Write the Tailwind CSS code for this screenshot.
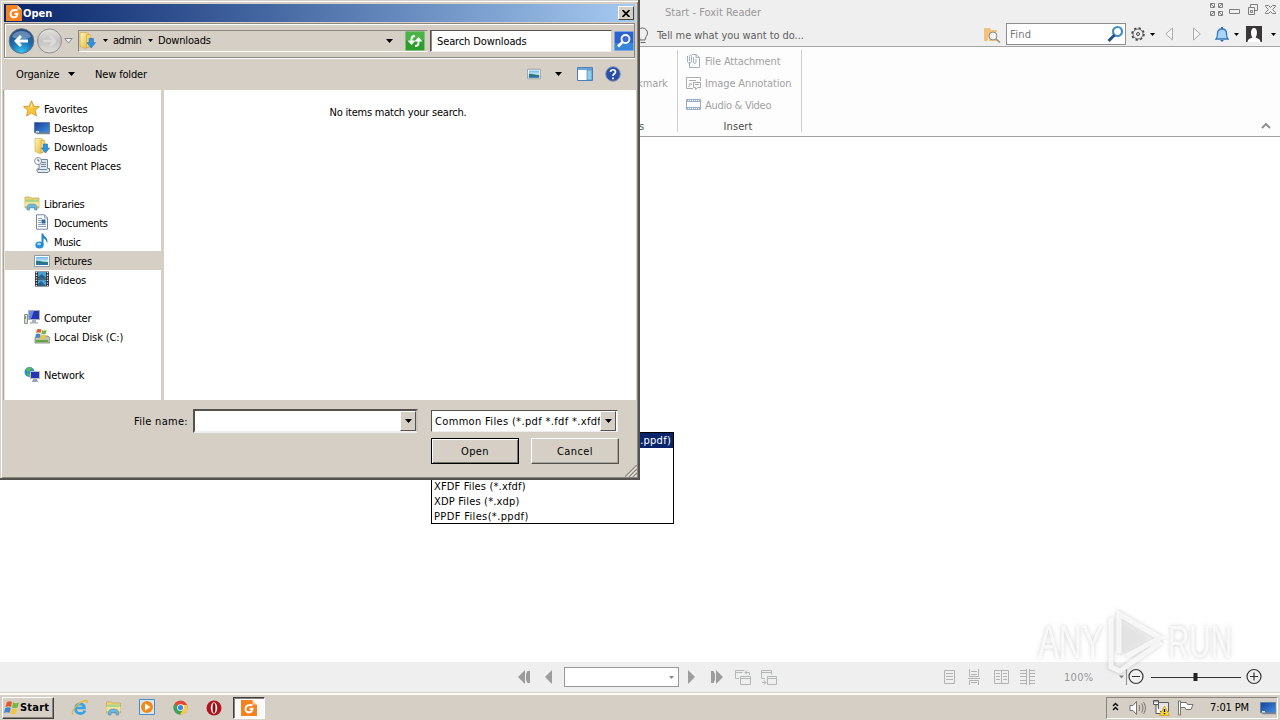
<!DOCTYPE html>
<html lang="en">
<head>
<meta charset="utf-8">
<title>Start - Foxit Reader</title>
<script src="https://cdn.jsdelivr.net/npm/@tailwindcss/browser@4"></script>
</head>
<body class="relative flex h-[720px] w-[1280px] flex-col overflow-hidden bg-white font-['DejaVu_Sans_Condensed','DejaVu_Sans',sans-serif] text-[11px] leading-[19px] text-black [font-stretch:condensed]">
<svg class="absolute h-0 w-0">
  <defs>
    <linearGradient id="gold" x1="0" y1="0" x2="1" y2="1"><stop offset="0" stop-color="#fff6b8"/><stop offset="1" stop-color="#e5b83f"/></linearGradient>
    <linearGradient id="screen" x1="0" y1="0" x2="1" y2="1"><stop offset="0" stop-color="#1a3c98"/><stop offset="1" stop-color="#3f93e4"/></linearGradient>
    <radialGradient id="orb" cx=".5" cy=".95" r=".95"><stop offset="0" stop-color="#35c4f4"/><stop offset=".5" stop-color="#1c6db0"/><stop offset="1" stop-color="#24477c"/></radialGradient>
    <linearGradient id="silver" x1="0" y1="0" x2="0" y2="1"><stop offset="0" stop-color="#e4e3e2"/><stop offset=".5" stop-color="#c4c2c0"/><stop offset="1" stop-color="#e2e0de"/></linearGradient>
    <linearGradient id="sky" x1="0" y1="0" x2="0" y2="1"><stop offset="0" stop-color="#6db7ea"/><stop offset=".6" stop-color="#d4eef5"/><stop offset="1" stop-color="#2b6d9a"/></linearGradient>
    <symbol id="foxit" viewBox="0 0 16 16"><path d="M0 0h11l5 5v11H0z" fill="#f58220"/><path d="M11.500 0v4.500H16z" fill="#ffd3a6"/><path d="M11.500 5.300C8 4.300 4.500 5.500 4.500 9c0 3 2.500 3.600 4.500 3.200 2-.5 2.300-1.700 2.500-3.400H8.500" fill="none" stroke="#fff" stroke-width="1.900"/></symbol>
    <symbol id="dl" viewBox="0 0 16 16"><path d="M1 .5h6l2 1v13l-3 1-5-2z" fill="url(#gold)" stroke="#d0a640" stroke-width=".6"/><path d="M7 2.500h4v11l-4 1z" fill="#f4d676" stroke="#c79f35" stroke-width=".5"/><path d="M9.500 6h4v4h2l-4 5-4-5h2z" fill="#2f93e0" stroke="#1c6cb4" stroke-width=".6"/></symbol>
    <symbol id="pic" viewBox="0 0 16 14"><path d="M.5 1.500h15v11H.5z" fill="#fff" stroke="#8a9aa6"/><path d="M2 3h12v8H2z" fill="url(#sky)"/><path d="M2 7c3-1 6 1 12 1v3H2z" fill="#2a7a7c"/><path d="M2 9.500h12V11H2z" fill="#2f6fa6"/></symbol>
    <symbol id="monitor" viewBox="0 0 16 14"><path d="M.5 1.500h15v10H.5z" fill="url(#screen)" stroke="#5f7fa8"/><path d="M1 12h15v1.300H3z" fill="#7d8894"/><path d="M2 10h3v1.500H2z" fill="#dbe7f3"/></symbol>
    <symbol id="down" viewBox="0 0 7 4"><path d="M0 0h7L3.500 4z" fill="currentColor"/></symbol>
    <symbol id="explorer" viewBox="0 0 16 16"><path d="M1 2h5l1 1h8v10H1z" fill="#eed175" stroke="#c4a44c" stroke-width=".7"/><path d="M2 4.500h12v3H2z" fill="#a9d68a"/><path d="M1 7h14v4H1z" fill="#f6e499"/><path d="M3 15v-3c0-4 10-4 10 0v3h-2.500v-2.500h-5V15z" fill="#69b8e6" stroke="#3f8abf" stroke-width=".6"/></symbol>
  </defs>
</svg>

<!-- Application title and quick access bar -->
<header class="flex h-[47px] shrink-0 flex-col border-b border-[#a3a3a3] bg-[#efefef] pl-[640px] text-[#5f5f5f]">
  <div class="flex h-[23px] items-center justify-between pr-[3px]">
    <span class="ml-[25px] pt-[2px] tracking-[0.02px] text-[#979797]">Start - Foxit Reader</span>
    <svg class="mb-[4px] h-[15px] w-[68px]" viewBox="0 0 68 15" fill="none" stroke="#7e7e7e"><path d="M1.500 1.500h4v4h-4zM9.500 1.500h4v4h-4zM1.500 9.500h4v4h-4zM9.500 9.500h4v4h-4zM2 2l3 3M13 2l-3 3M2 13l3-3M13 13l-3-3"/><path d="M20.500 7.500h10v4h-10z"/><path d="M41.500 5V2.500h7v6H46M39.500 5.500h6v7h-6zM41.500 8.500h2v2h-2z"/><path d="M56.500 3.500h3l2 2 2-2h3v1l-3 3 3 3v1h-3l-2-2-2 2h-3v-1l3-3-3-3z"/></svg>
  </div>
  <div class="flex h-[23px] items-center">
    <svg class="-ml-[4px] h-[18px] w-[14px]" viewBox="0 0 14 18" fill="none" stroke="#666"><path d="M4 14c0-3-2.500-4-2.500-7a5 5 0 0 1 10 0c0 3-2.500 4-2.500 7zM4.500 16.500h5"/></svg>
    <span class="ml-[7px] pt-px tracking-[-0.06px]">Tell me what you want to do...</span>
    <svg class="ml-auto h-[16px] w-[18px]" viewBox="0 0 18 16"><path d="M1 1h6l1 2h6v11H1z" fill="#f2c27c"/><path d="M14 6H8l-3 8" fill="none" stroke="#fff"/><circle cx="10" cy="9" r="4" fill="#f4f4f4" stroke="#8b8b8b"/><path d="m13 12 4 3.500" stroke="#8b8b8b" stroke-width="1.500"/></svg>
    <div class="mb-px ml-[5px] flex h-[22px] w-[120px] items-center justify-between border border-[#8e8e8e] bg-white pl-[3px]"><span class="tracking-[0.3px] text-[#777]">Find</span>
      <svg class="mr-[1px] h-[18px] w-[17px]" viewBox="0 0 17 18" fill="none"><circle cx="10.500" cy="6.500" r="4.500" stroke="#3f8fc4" stroke-width="2.200"/><path d="m7.500 10-6 6" stroke="#24517f" stroke-width="3"/></svg></div>
    <svg class="ml-[5px] h-[16px] w-[14px]" viewBox="0 0 14 16" fill="none" stroke="#444"><circle cx="7" cy="7" r="6" stroke-width="1.500" stroke-dasharray="2.300 2.400"/><circle cx="7" cy="7" r="5" stroke-width=".8"/><circle cx="7" cy="7" r="1.500"/></svg>
    <svg class="mb-px ml-[5px] h-[3px] w-[5px] text-black"><use href="#down"/></svg>
    <svg class="mb-[2px] ml-[10px] h-[14px] w-[8px]" viewBox="0 0 8 14" fill="#f4f4f4" stroke="#adadad"><path d="M7.500 1v12L.7 7z"/></svg>
    <svg class="mb-[2px] ml-[20px] h-[14px] w-[8px]" viewBox="0 0 8 14" fill="#f4f4f4" stroke="#adadad"><path d="M.5 1v12L7.300 7z"/></svg>
    <svg class="ml-[14px] h-[15px] w-[14px]" viewBox="0 0 14 15"><path d="M1 12c1.500-1.500 1.500-3 1.500-5.500C2.500 3.500 4 2 7 2s4.500 1.500 4.500 4.500C11.500 9 11.500 10.500 13 12z" fill="#a9d5fa" stroke="#3579bd" stroke-width="1.300"/><path d="M5 13h4l-2 2zM6 0h2v2H6z" fill="#2e6aa9"/></svg>
    <svg class="mb-px ml-[5px] h-[3px] w-[5px] text-black"><use href="#down"/></svg>
    <svg class="mb-px ml-[7px] h-[16px] w-[16px]" viewBox="0 0 16 16"><path d="M0 0h16v16H0z" fill="#3b3636"/><path d="M1.500 16c.5-3.500 3-3.500 5-4.500-2-2-2.300-9.500 1.500-9.500s3.500 7.500 1.500 9.500c2 1 4.500 1 5 4.500z" fill="#fff"/></svg>
    <svg class="mr-[4px] mb-px ml-[9px] h-[3px] w-[5px] text-black"><use href="#down"/></svg>
  </div>
</header>

<!-- Ribbon -->
<section class="flex h-[90px] shrink-0 border-b border-[#a3a3a3] bg-[#fdfdfd] pt-[3px] pb-[4px] pl-[640px] text-[#a2a2a2]">
  <div class="flex w-[38px] flex-col border-r border-[#cfcfcf] pt-[24px]"><span class="-ml-[3px] tracking-[-0.1px]">kmark</span><span class="mt-[24px] -ml-px text-[#555]">s</span></div>
  <div class="flex w-[124px] flex-col border-r border-[#cfcfcf] pl-[8px] *:shrink-0">
    <div class="flex h-[22px] items-center gap-[4px]"><svg class="h-[16px] w-[15px]" viewBox="0 0 15 16" fill="none" stroke="#a5b0bf"><path d="M6 1.500h4l3.500 3v10h-10V9"/><path d="M10 1.500v3h3.500M1.500 3v5c0 3 4 3 4 0V3.500c0-2-2-2-2 0V8M7.500 4v5c0 2 2.500 2 2.500 0V6"/></svg><span class="tracking-[-0.15px]">File Attachment</span></div>
    <div class="flex h-[22px] items-center gap-[4px]"><svg class="h-[16px] w-[15px]" viewBox="0 0 15 16" fill="none" stroke="#ababab"><path d="M7 13.500H.5v-11h14V6M3 5.500h7M2.500 12l2-4 1.500 2"/><path d="M7.500 7.500h7v5h-3l-2 2v-2h-2zM9 9.500h4"/></svg><span class="tracking-[-0.13px]">Image Annotation</span></div>
    <div class="flex h-[22px] items-center gap-[4px]"><svg class="h-[14px] w-[15px]" viewBox="0 0 15 14" fill="none" stroke="#9eafca"><path d="M.5 1.500h14v10H.5zM.5 3.500h14M.5 9.500h14"/><path d="M1 2.500h14M1 10.500h14" stroke-dasharray="1 1"/></svg><span class="tracking-[-0.28px]">Audio &amp; Video</span></div>
    <span class="mt-px w-[104px] text-center tracking-[0.1px] text-[#4a4a4a]">Insert</span>
  </div>
  <svg class="mt-auto mr-[9px] mb-[3px] ml-auto h-[6px] w-[10px]" viewBox="0 0 10 6" fill="none" stroke="#8c8c8c" stroke-width="1.800"><path d="m1 5 4-4 4 4"/></svg>
</section>

<main class="min-h-0 flex-1 bg-white"></main>

<!-- Page navigation and zoom -->
<footer class="flex h-[30px] shrink-0 items-center bg-[#efefef] pl-[518px] text-[#999]">
  <svg class="h-[14px] w-[12px]" viewBox="0 0 12 14" fill="#9c9c9c"><path d="M7 0v14L0 7zM9.500 1H12v12H9.500L8 10V4z"/></svg>
  <svg class="ml-[15px] h-[14px] w-[7px]" viewBox="0 0 7 14" fill="#9c9c9c"><path d="M7 0v14L0 7z"/></svg>
  <div class="ml-[12px] flex h-[20px] w-[115px] items-center justify-end border border-[#999] bg-white pr-[4px]"><svg class="h-[3px] w-[5px] text-[#888]"><use href="#down"/></svg></div>
  <svg class="ml-[9px] h-[14px] w-[7px]" viewBox="0 0 7 14" fill="#9c9c9c"><path d="M0 0v14l7-7z"/></svg>
  <svg class="ml-[16px] h-[14px] w-[12px]" viewBox="0 0 12 14" fill="#9c9c9c"><path d="M5 0v14l7-7zM0 1h2.500L4 4v6l-1.500 3H0z"/></svg>
  <svg class="ml-[12px] h-[17px] w-[17px]" viewBox="0 0 17 17" fill="none" stroke="#b2b8b5"><path d="M4 9.500H.5v-8h9M.5 3.500h7M5.500 7.500h10v8h-10zM5.500 9.500h10M14.500 6V3.500H10M12 1.500l-2 2 2 2"/></svg>
  <svg class="ml-[9px] h-[17px] w-[17px]" viewBox="0 0 17 17" fill="none" stroke="#b2b8b5"><path d="M4 9.500H.5v-8h10v4M.5 3.500h10M6.500 7.500h9v8h-9zM6.500 9.500h9M1 13.500h4M3 11.500l2 2-2 2"/></svg>
  <svg class="ml-[166px] h-[16px] w-[92px]" viewBox="0 0 92 16" fill="none" stroke="#b3b3b3"><path d="M.5 1.500h10v13H.5zM2 4.500h7M2 7.500h7M2 10.500h7"/><path d="M25.500 0v7.500h9V0M27 2.500h6M27 5.500h6M24 9.500h12M25.500 16v-4.500h9V16M27 13.500h6"/><path d="M50.500 1.500h14v13h-14zM57.500 1v14M52 4.500h4M52 7.500h4M52 10.500h4M59 4.500h4M59 7.500h4M59 10.500h4"/><path d="M82.500 0v16M85.500 0v16M76 1.500h6M76 4.500h6M76 7.500h6M76 11.500h6M76 14.500h6M86 1.500h5M86 4.500h5M86 7.500h5M86 11.500h5M86 14.500h5"/></svg>
  <span class="ml-[28px] w-[42px] shrink-0 tracking-[0.3px]">100%</span>
  <svg class="ml-[13px] h-[18px] w-[148px]" viewBox="0 0 148 18" fill="none" stroke="#333" stroke-width="1.200"><path d="M0 7.500h5l-2.500 3z" fill="#888" stroke="none"/><path d="M7.500 1v16" stroke="#999"/><circle cx="17" cy="8.500" r="7"/><path d="M13 8.500h8M32 9.500h90"/><path d="M74.500 5h4v8h-4z" fill="#222" stroke="none"/><circle cx="135" cy="8.500" r="7"/><path d="M131 8.500h8M135 4.500v8"/></svg>
</footer>

<!-- Taskbar -->
<nav class="flex h-[28px] shrink-0 items-center border-t border-[#d8d4cc] bg-[#d6cfc6] pl-[2px] shadow-[inset_0_2px_0_#fbfaf6]">
  <div class="mt-[2px] flex h-[22px] w-[52px] items-center border border-t-white border-r-[#404040] border-b-[#404040] border-l-white pl-px shadow-[inset_-1px_-1px_0_#8a857c]">
    <svg class="h-[16px] w-[16px]" viewBox="0 0 16 16"><path d="M3 2c2-1 3-1 5 0L7 7C5 6 4 6 1.500 7z" fill="#e2582c"/><path d="M9 2.500c2 1 4 1 6 0l-1.500 5c-2 1-3.500 1-5.500 0z" fill="#77b843"/><path d="M1.200 8C3.500 7 5 7 6.800 8l-1.300 5C4 12 2 12 0 13z" fill="#4383cf"/><path d="M8 8.500c2 1 3.500 1 5.500 0l-1.500 5c-2 1-4 1-5.500 0z" fill="#f5c43a"/></svg>
    <span class="font-bold tracking-[0.2px]">Start</span>
  </div>
  <svg class="mt-[2px] ml-[17px] h-[17px] w-[17px]" viewBox="0 0 17 17" fill="none"><path d="M14 11.500c-2 4.500-9.500 4-9.500-2S13.500 3.500 13.500 9H5" stroke="#35a4e5" stroke-width="2.700"/><path d="M2 15.500C-1 12 9 2 15 1.500c1.500 0 1.500 1 .7 2.500" stroke="#e9b92e" stroke-width="1.300"/></svg>
  <svg class="mt-[2px] ml-[17px] h-[16px] w-[17px]"><use href="#explorer"/></svg>
  <svg class="mt-[2px] ml-[17px] h-[17px] w-[17px]" viewBox="0 0 17 17"><path d="M.5.5h15v15H.5z" fill="#d7e9f8" stroke="#4c8cc8"/><circle cx="8" cy="8" r="6" fill="#f48a16"/><path d="M6 4.500v7L11.500 8z" fill="#fff"/></svg>
  <svg class="mt-[2px] ml-[17px] h-[15px] w-[15px]" viewBox="0 0 16 16"><circle cx="8" cy="8" r="7.500" fill="#e2483a"/><path d="M1.500 4.300A7.500 7.500 0 0 0 7.500 15.500L11 10 8 8z" fill="#39a55a"/><path d="M15 5.300A7.500 7.500 0 0 1 7.500 15.500L11.500 9 8.500 5z" fill="#f8cf3e"/><circle cx="8" cy="8" r="3.600" fill="#fff"/><circle cx="8" cy="8" r="2.800" fill="#4386e0"/></svg>
  <svg class="mt-[2px] ml-[18px] h-[16px] w-[16px]" viewBox="0 0 16 16"><circle cx="8" cy="8" r="7.500" fill="#b3131b"/><ellipse cx="8" cy="8" rx="3.200" ry="5.800" fill="#fff"/><ellipse cx="8" cy="8" rx="1.500" ry="5" fill="#8d0d14"/></svg>
  <div class="mt-[2px] ml-[11px] flex h-[22px] w-[32px] items-center justify-center border border-t-[#404040] border-r-white border-b-white border-l-[#404040] bg-[#fbfaf8] shadow-[inset_1px_1px_0_#85807a]"><svg class="h-[16px] w-[16px]"><use href="#foxit"/></svg></div>
  <div class="mt-[2px] mr-[2px] ml-auto flex h-[22px] w-[172px] items-center border border-t-[#8a857c] border-r-white border-b-white border-l-[#8a857c] pl-[5px]">
    <svg class="mb-[2px] h-[9px] w-[7px]" viewBox="0 0 7 9" fill="none" stroke="#000" stroke-width="1.400"><path d="M1 4l2.500-2.500L6 4M1 8l2.500-2.500L6 8"/></svg>
    <svg class="ml-[10px] h-[16px] w-[17px]" viewBox="0 0 17 16" fill="none" stroke="#77736d"><path d="M1 5.500h3l3.500-4v13L4 10.500H1z" fill="#fff"/><path d="M10 5c1 2 1 4 0 6M12.500 3.500c2 3 2 6 0 9M14.500 2c2.500 4 2.500 8 0 12"/></svg>
    <svg class="ml-[7px] h-[16px] w-[17px]" viewBox="0 0 17 16" fill="none"><path d="M5.500 2.500h10v9h-10z" fill="#e5e5e5" stroke="#5d5d5d"/><path d="M.5.500h5v4h-5zM3 4.500v9h5" fill="#fff" stroke="#555"/><path d="M2 .5v2M4 .5v2" stroke="#555"/><path d="M11.500 6l5 9.500h-10z" fill="#fbd62b" stroke="#c99b11" stroke-width=".7"/><path d="M11.500 9v3M11.500 13v1.200" stroke="#000" stroke-width="1.300"/></svg>
    <svg class="ml-[7px] h-[16px] w-[17px]" viewBox="0 0 17 16" fill="#fff" stroke="#77736d"><path d="M1.500 1h2v14h-2z"/><path d="M3.500 2.500h6l1 2h5.500l-2 5H9l-1-2H3.500z"/></svg>
    <span class="ml-[16px] tracking-[-0.12px] whitespace-nowrap">7:01 PM</span>
    <svg class="mr-[1px] ml-auto h-[14px] w-[16px]"><use href="#monitor"/></svg>
  </div>
</nav>

<!-- Recorder watermark -->
<svg class="absolute top-[604px] left-[1030px] h-[76px] w-[220px] drop-shadow-[0_0_2px_rgba(0,0,0,0.25)]" viewBox="0 0 220 76">
  <g fill="#fff" fill-opacity=".72" font-family="Liberation Sans Narrow, Liberation Sans, sans-serif" font-size="47"><text x="8" y="54" textLength="65" lengthAdjust="spacingAndGlyphs">ANY</text><text x="138" y="54" textLength="64" lengthAdjust="spacingAndGlyphs">RUN</text></g>
  <path d="M90 16v36l30-18z" fill="#e8e8e8" fill-opacity=".5"/>
  <g fill="none" stroke="#fff" stroke-opacity=".75" stroke-width="5"><path d="M81 14v49l9 4 41-29M89 49V10l41 24-33 18"/></g>
</svg>

<!-- File type drop-down list -->
<div class="absolute top-[432px] left-[431px] flex h-[92px] w-[243px] flex-col border border-black bg-white leading-[15px]">
  <span class="h-[15px] bg-[#0a246a] pt-px pr-[2px] text-right leading-[14px] tracking-[0.25px] text-white">Common Files (*.pdf *.fdf *.xfdf *.xdp *.ppdf)</span>
  <div class="mt-[31px] flex flex-col pl-[2px]"><span class="tracking-[0.16px]">XFDF Files (*.xfdf)</span><span class="tracking-[0.18px]">XDP Files (*.xdp)</span><span class="tracking-[0.36px]">PPDF Files(*.ppdf)</span></div>
</div>

<!-- Open dialog -->
<section class="absolute top-0 left-0 flex h-[480px] w-[640px] flex-col border-r-2 border-b-2 border-[#55514c] bg-[#d6cfc6] shadow-[inset_1px_1px_0_#d6cfc6,inset_2px_2px_0_#fff,inset_-1px_-1px_0_#8b867e]">
  <div class="mt-[4px] ml-[4px] flex h-[18px] w-[631px] shrink-0 items-center justify-between bg-gradient-to-r from-[#0a246a] to-[#a6caf0] pr-px pl-[2px]">
    <div class="flex items-center gap-px"><svg class="h-[16px] w-[16px]"><use href="#foxit"/></svg><span class="font-bold tracking-[0.05px] text-white">Open</span></div>
    <div class="flex h-[14px] w-[16px] items-center justify-center border border-t-white border-r-[#404040] border-b-[#404040] border-l-white bg-[#d6cfc6]"><svg class="h-[7px] w-[8px]" viewBox="0 0 8 7" stroke="#000" stroke-width="1.700"><path d="M.5 0l7 7M7.500 0l-7 7"/></svg></div>
  </div>
  <div class="mt-px ml-[4px] flex h-[35px] w-[631px] shrink-0 items-center border border-[#8b867e] pl-[3px] shadow-[0_1px_0_#fff,inset_1px_1px_0_#fff]">
    <svg class="h-[28px] w-[56px] shrink-0" viewBox="0 0 56 28"><circle cx="13.500" cy="14" r="12.300" fill="url(#orb)" stroke="#5f7183"/><path d="M4 10c2-8 17-8 19 0-6 3-13 3-19 0z" fill="#fff" opacity=".3"/><path d="M20 14H9M13 9l-5 5 5 5" fill="none" stroke="#fff" stroke-width="2.800"/><circle cx="41.500" cy="14" r="12" fill="url(#silver)" stroke="#8f8d8b"/><path d="M35 14h11M42 9l5 5-5 5" fill="none" stroke="#dcdad8" stroke-width="2.500"/></svg>
    <svg class="h-[6px] w-[9px] shrink-0" viewBox="0 0 9 6"><path d="M.8.5h7.400L4.500 5z" fill="#eee" stroke="#888"/></svg>
    <div class="ml-[5px] flex h-[22px] w-[350px] shrink-0 items-center border border-t-[#8b867e] border-r-transparent border-b-white border-l-[#8b867e]">
      <svg class="h-[17px] w-[17px]"><use href="#dl"/></svg>
      <svg class="ml-[7px] h-[3px] w-[5px]"><use href="#down"/></svg>
      <span class="ml-[5px] w-[33px] tracking-[-0.55px]">admin</span>
      <svg class="ml-[2px] h-[3px] w-[5px]"><use href="#down"/></svg>
      <span class="ml-[5px] tracking-[-0.18px]">Downloads</span>
      <svg class="ml-auto h-[4px] w-[7px]"><use href="#down"/></svg>
      <svg class="mr-[2px] ml-[12px] h-[20px] w-[20px]" viewBox="0 0 20 20"><rect x=".5" y=".5" width="19" height="19" rx="1" fill="#2c9e2c" stroke="#7fbf7b"/><path d="M1 1h18v8H1z" fill="#67c75f" opacity=".5"/><path d="M6.500 14L2.500 9.500h8zM13.500 6l4 4.500h-8z" fill="#fff"/><path d="M6.500 10V8c0-2 1-3 3.500-3M13.500 10v2c0 2-1 3-3.500 3" fill="none" stroke="#fff" stroke-width="1.800"/></svg>
    </div>
    <div class="ml-[2px] flex h-[22px] w-[182px] shrink-0 items-center border border-t-[#55514c] border-r-[#d6cfc6] border-b-[#eee] border-l-[#55514c] bg-white pt-px pl-[6px] tracking-[-0.12px] shadow-[inset_1px_0_0_#8b867e]">Search Downloads</div>
    <svg class="ml-[2px] h-[20px] w-[20px] shrink-0" viewBox="0 0 20 20"><rect x=".5" y=".5" width="19" height="19" rx="1" fill="#2b62cf" stroke="#7fa6dd"/><path d="M1 12h18v7H1z" fill="#3fa0e4" opacity=".6"/><circle cx="11.500" cy="8" r="4" fill="#3b6bd0" stroke="#fff" stroke-width="1.800"/><path d="M8.500 11l-4.500 4.500" stroke="#fff" stroke-width="2.500"/></svg>
  </div>
  <div class="flex h-[32px] shrink-0 items-center pl-[16px]">
    <span class="w-[44px] tracking-[-0.12px]">Organize</span><svg class="ml-[8px] h-[4px] w-[7px]"><use href="#down"/></svg>
    <span class="ml-[20px] tracking-[-0.15px]">New folder</span>
    <svg class="ml-auto h-[12px] w-[14px]"><use href="#pic"/></svg>
    <svg class="ml-[14px] h-[4px] w-[7px]"><use href="#down"/></svg>
    <svg class="ml-[15px] h-[14px] w-[16px]" viewBox="0 0 16 14"><path d="M.5.5h15v13H.5z" fill="#fff" stroke="#4d7fb8"/><path d="M1 1h14v2H1z" fill="#6ea5d8"/><path d="M10 3h5v10h-5z" fill="#8bd0ea" stroke="#4d7fb8" stroke-width=".7"/></svg>
    <svg class="mr-[17px] ml-[12px] h-[16px] w-[16px]" viewBox="0 0 16 16"><circle cx="8" cy="8" r="7.300" fill="#2a4fa8" stroke="#8494ae"/><path d="M5.500 6C5.500 3 10.500 3 10.500 6 10.500 8 8 7.500 8 10M8 11.500v1.700" fill="none" stroke="#fff" stroke-width="1.700"/></svg>
  </div>
  <div class="ml-[3px] flex h-[310px] w-[633px] shrink-0 border-l border-[#aaa59d]">
    <div class="flex w-[157px] flex-col border-l border-[#e8e5e0] bg-white pt-[9px] tracking-[-0.13px] *:flex *:h-[19px] *:shrink-0 *:items-center">
      <div class="gap-[4px] pl-[18px]"><svg class="-mt-px h-[17px] w-[17px]" viewBox="0 0 16 16"><path d="M8 .8l2.100 5 5.300.4-4 3.500 1.300 5.300L8 12.200 3.300 15l1.300-5.300-4-3.500 5.300-.4z" fill="#fbc63b" stroke="#d98b1d" stroke-width=".8"/><path d="M8 3l1.300 4H6.500z" fill="#fff0a8"/></svg><span class="pt-px">Favorites</span></div>
      <div class="gap-[4px] pl-[29px]"><svg class="h-[14px] w-[16px]"><use href="#monitor"/></svg><span class="pt-px">Desktop</span></div>
      <div class="gap-[4px] pl-[29px]"><svg class="-mt-px h-[16px] w-[16px]"><use href="#dl"/></svg><span class="pt-px">Downloads</span></div>
      <div class="gap-[4px] pl-[29px]"><svg class="-mt-px h-[16px] w-[16px]" viewBox="0 0 16 16"><path d="M5 2.500h8.500v9h2V14l-1.500 1.500H4L3 14v-2h2z" fill="#dfe7ee" stroke="#76838f"/><path d="M7 5.500h5M7 7.500h5M7 9.500h5M4 12.500h9" stroke="#7088a0"/><circle cx="4" cy="4" r="3.500" fill="#f6f8fa" stroke="#8594a2"/><path d="M4 2v2h1.500" fill="none" stroke="#567"/></svg><span class="pt-px">Recent Places</span></div>
      <div></div>
      <div class="gap-[4px] pl-[19px]"><svg class="-mt-px h-[16px] w-[16px]"><use href="#explorer"/></svg><span class="pt-px tracking-[-0.25px]">Libraries</span></div>
      <div class="gap-[4px] pl-[29px]"><svg class="-mt-px h-[16px] w-[16px]" viewBox="0 0 16 16"><path d="M2.500.8h8l3 3v11.400h-11z" fill="#fff" stroke="#74889c"/><path d="M10.500 1v3h3M4 4.500h4M4 6.500h3M4 8.500h3M4 10.500h8M4 12.500h8" fill="none" stroke="#8ca2b8"/><path d="M7.500 5.500h4v4h-4z" fill="#2f69ad"/></svg><span class="pt-px tracking-[-0.3px]">Documents</span></div>
      <div class="gap-[4px] pl-[29px]"><svg class="-mt-px h-[16px] w-[16px]" viewBox="0 0 16 16"><ellipse cx="5.500" cy="12" rx="4.200" ry="3.500" fill="#2c8fd9"/><ellipse cx="5" cy="11" rx="2" ry="1.300" fill="#9bd6f7"/><path d="M7.500 12V.5h1.800c0 3 6 4 3.700 10.500 0-3.500-2-5-3.500-5.500V12z" fill="#2c86cc"/></svg><span class="pt-px tracking-[-0.3px]">Music</span></div>
      <div class="gap-[4px] bg-[#d6cfc6] pl-[29px]"><svg class="h-[14px] w-[16px]"><use href="#pic"/></svg><span class="pt-px">Pictures</span></div>
      <div class="gap-[4px] pl-[29px]"><svg class="-mt-px h-[16px] w-[16px]" viewBox="0 0 16 16"><path d="M1 .5h14v15H1z" fill="#2d2f36"/><path d="M4 1h8v6.500H4zM4 8.500h8V15H4z" fill="#4ba0d0"/><path d="M4 6l4-3 4 4H4zM4 13l3-3 5 5H4z" fill="#2a5f8c"/><path d="M2.500 1v14M13.500 1v14" stroke="#e2e5e8" stroke-width="1.400" stroke-dasharray="1.300 1.300"/></svg><span class="pt-px">Videos</span></div>
      <div></div>
      <div class="gap-[4px] pl-[19px]"><svg class="-mt-px h-[16px] w-[16px]" viewBox="0 0 16 16"><path d="M4.500 1.500h11v9h-11z" fill="#2436b4" stroke="#aab2bd"/><path d="M5 2h5L7 10H5z" fill="#6b85e6"/><path d="M8 11h4v2h2v1.500H6V13h2z" fill="#aab2bd"/><path d="M.5 5.500h3v9h-3z" fill="#dce3d9" stroke="#8a948a"/><path d="M1.500 7v3" stroke="#61ab4b"/></svg><span class="pt-px tracking-[-0.25px]">Computer</span></div>
      <div class="gap-[4px] pl-[29px]"><svg class="-mt-px h-[17px] w-[16px]" viewBox="0 0 16 17"><path d="M1 10l2-2h11l2 2v5H1z" fill="#b9c5b4" stroke="#76836f" stroke-width=".8"/><path d="M2 12h12v2H2z" fill="#65a343"/><path d="M3 1.500c1.500-.8 3-.8 4.500 0L6.500 5C5 4.400 3.500 4.400 2 5z" fill="#e2582c"/><path d="M8.200 2c1.500.7 3 .7 4.500 0l-1 4c-1.500.6-3 .6-4.500 0z" fill="#77b843"/><path d="M2 6c1.500-.7 3-.7 4.500 0l-1 4C4 9.300 2.500 9.300 1 10z" fill="#4383cf"/><path d="M7.200 6.500c1.500.7 3 .7 4.500 0l-1 4c-1.500.6-3 .6-4.500 0z" fill="#f5c43a"/></svg><span class="pt-px">Local Disk (C:)</span></div>
      <div></div>
      <div class="gap-[4px] pl-[19px]"><svg class="-mt-px h-[16px] w-[16px]" viewBox="0 0 16 16"><circle cx="5.500" cy="6" r="5" fill="#2f93c9"/><path d="M2 3c2-2 5-2 6-1L6 5 3 6zM3 8l3-1 1 3-2 1z" fill="#5db654"/><path d="M6.500 5.500h9v7h-9z" fill="#2436b4" stroke="#b6c0cc"/><path d="M9 13h4v1.500h1V16H8v-1.500h1z" fill="#97a3b1"/></svg><span class="pt-px">Network</span></div>
    </div>
    <div class="ml-[3px] flex-1 bg-white pt-[13px] pr-[4px] text-center tracking-[-0.23px]">No items match your search.</div>
  </div>
  <div class="flex h-[42px] shrink-0 items-center justify-end pr-[20px]">
    <span class="tracking-[0.3px]">File name:</span>
    <div class="ml-[5px] flex h-[24px] w-[225px] items-stretch justify-end border-2 border-t-[#55514c] border-r-[#c9c4bb] border-b-[#eee] border-l-[#55514c] bg-white"><div class="flex w-[16px] items-center justify-center border border-t-white border-r-[#55514c] border-b-[#55514c] border-l-white bg-[#d6cfc6]"><svg class="h-[4px] w-[7px]"><use href="#down"/></svg></div></div>
    <div class="ml-[13px] flex h-[22px] w-[187px] items-stretch overflow-hidden border border-t-[#55514c] border-r-[#eee] border-b-[#eee] border-l-[#55514c] bg-white pr-px pl-[3px]"><span class="w-0 flex-1 overflow-hidden pt-px tracking-[0.34px] whitespace-nowrap">Common Files (*.pdf *.fdf *.xfdf</span><div class="flex w-[16px] items-center justify-center border border-t-white border-r-[#55514c] border-b-[#55514c] border-l-white bg-[#d6cfc6]"><svg class="h-[4px] w-[7px]"><use href="#down"/></svg></div></div>
  </div>
  <div class="mt-[-4px] flex h-[26px] shrink-0 justify-end gap-[12px] pr-[19px]">
    <div class="flex w-[88px] items-center justify-center border border-black tracking-[0.4px] shadow-[inset_1px_1px_0_#fff,inset_-1px_-1px_0_#77726a]">Open</div>
    <div class="flex w-[88px] items-center justify-center border border-t-white border-r-[#55514c] border-b-[#55514c] border-l-white tracking-[0.4px] shadow-[inset_-1px_-1px_0_#a9a49b]">Cancel</div>
  </div>
  <svg class="mt-auto mr-[1px] mb-[1px] ml-auto h-[12px] w-[12px]" viewBox="0 0 12 12" stroke-width="1.400"><path d="M0 12L12 0M4 12l8-8M8 12l4-4" stroke="#8b867e"/><path d="M1.500 12L12 1.500M5.500 12L12 5.500M9.500 12L12 9.500" stroke="#fff" stroke-width=".8"/></svg>
</section>
</body>
</html>
